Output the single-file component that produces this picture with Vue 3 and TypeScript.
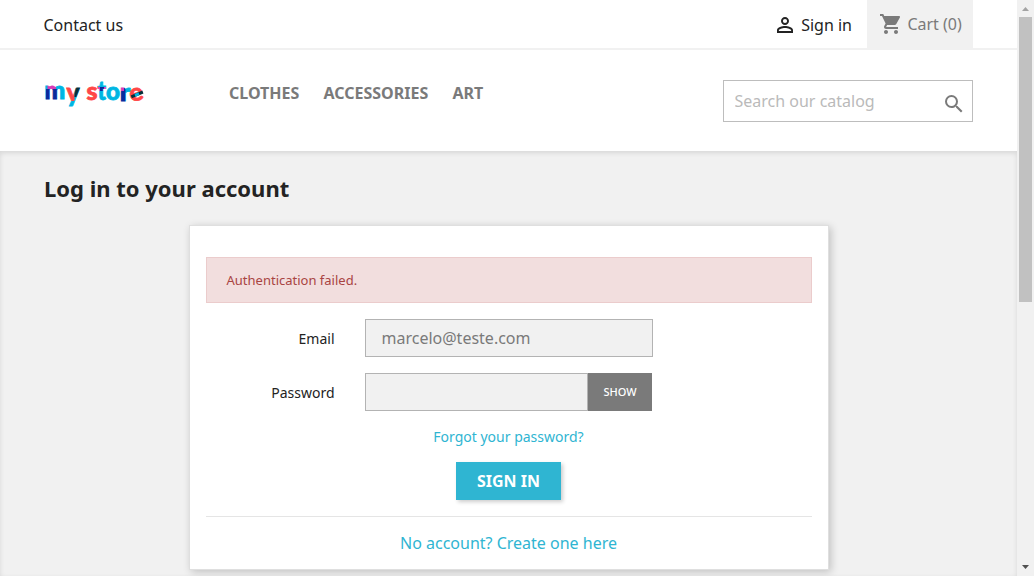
<script setup lang="ts">
import { ref } from 'vue'

const menu: string[] = ['Clothes', 'Accessories', 'Art']
const email = ref('marcelo@teste.com')
const password = ref('')
const search = ref('')
const visible = ref(false)
</script>

<template>
  <div class="window">
    <div class="page">
      <header>
        <nav class="top-nav">
          <div class="container top-row">
            <a class="contact">Contact us</a>
            <div class="tools">
              <a class="signin">
                <svg class="icon-user" viewBox="0 0 24 24" width="24" height="24">
                  <path d="M12 5.900a2.100 2.100 0 1 1 0 4.200 2.100 2.100 0 0 1 0-4.200m0 9c2.970 0 6.100 1.460 6.100 2.100v1.100H5.900V17c0-.64 3.130-2.100 6.100-2.100M12 4C9.790 4 8 5.790 8 8s1.790 4 4 4 4-1.790 4-4-1.790-4-4-4zm0 9c-2.670 0-8 1.340-8 4v3h16v-3c0-2.660-5.330-4-8-4z" />
                </svg>
                <span>Sign in</span>
              </a>
              <div class="cart">
                <svg viewBox="0 0 24 24" width="24" height="24">
                  <path d="M7 18c-1.100 0-1.990.9-1.990 2S5.900 22 7 22s2-.9 2-2-.9-2-2-2zM1 2v2h2l3.600 7.590-1.350 2.450c-.16.28-.25.61-.25.96 0 1.100.9 2 2 2h12v-2H7.420c-.14 0-.25-.11-.25-.25l.03-.12.9-1.630h7.450c.75 0 1.410-.41 1.750-1.030l3.580-6.490c.08-.14.12-.31.12-.48 0-.55-.45-1-1-1H5.210l-.94-2H1zm16 16c-1.100 0-1.990.9-1.990 2s.89 2 1.990 2 2-.9 2-2-.9-2-2-2z" />
                </svg>
                <span>Cart (0)</span>
              </div>
            </div>
          </div>
        </nav>
        <div class="container brand-row">
          <svg class="logo" width="100" height="48" viewBox="44 70 100 48" role="img" aria-label="my store">
            <defs>
              <pattern id="logo-ink" patternUnits="userSpaceOnUse" x="0" y="0" width="200" height="200">
                <rect width="200" height="200" fill="#00b5e2" />
                <rect x="47.500" y="80" width="8.500" height="9" fill="#d63ab5" />
                <rect x="46" y="89" width="12.500" height="14" fill="#0a2a9c" />
                <rect x="66" y="80" width="8.500" height="21" fill="#ff4747" />
                <rect x="74.500" y="80" width="6" height="17" fill="#04303a" />
                <rect x="86" y="80" width="12" height="30" fill="#ff4747" />
                <rect x="98" y="87" width="8" height="4" fill="#d63ab5" />
                <rect x="100" y="87" width="4" height="4" fill="#0a2a9c" />
                <rect x="120" y="80" width="5.500" height="30" fill="#0a2a9c" />
                <rect x="120" y="80" width="4" height="11" fill="#d63ab5" />
              </pattern>
            </defs>
            <g class="wordmark" fill="url(#logo-ink)" stroke="url(#logo-ink)">
              <text x="44.200" y="99" textLength="21" lengthAdjust="spacingAndGlyphs">m</text>
              <text class="tall" x="66.500" y="101.500" textLength="13" lengthAdjust="spacingAndGlyphs">y</text>
              <text x="86.500" y="100" textLength="11" lengthAdjust="spacingAndGlyphs">s</text>
              <text class="tall" x="97.500" y="100" textLength="8.500" lengthAdjust="spacingAndGlyphs">t</text>
              <text x="106" y="100" textLength="14" lengthAdjust="spacingAndGlyphs">o</text>
              <text x="119.800" y="100.500" textLength="10.500" lengthAdjust="spacingAndGlyphs">r</text>
              <text class="red" x="129.500" y="100.500" textLength="13.500" lengthAdjust="spacingAndGlyphs" transform="rotate(-14 137 94)">e</text>
            </g>
            <g fill="none" stroke-width="3">
              <path stroke="#04303a" d="M131.300 96.800 142.900 92" />
              <path stroke="#00b5e2" d="M135 95.300 139 93.600" />
            </g>
          </svg>
          <ul class="menu">
            <li v-for="item in menu" :key="item">{{ item }}</li>
          </ul>
          <form class="search" @submit.prevent>
            <input v-model="search" type="text" placeholder="Search our catalog" />
            <svg viewBox="0 0 24 24" width="24" height="24">
              <path d="M15.500 14h-.79l-.28-.27A6.471 6.471 0 0 0 16 9.500 6.500 6.500 0 1 0 9.500 16c1.610 0 3.090-.59 4.230-1.570l.27.28v.79l5 4.990L20.490 19l-4.990-5zm-6 0C7.010 14 5 11.990 5 9.500S7.010 5 9.500 5 14 7.010 14 9.500 11.990 14 9.500 14z" />
            </svg>
          </form>
        </div>
      </header>

      <main class="wrapper">
        <div class="container">
          <h1>Log in to your account</h1>
          <section class="card">
            <div class="alert">Authentication failed.</div>
            <form @submit.prevent>
              <div class="field">
                <label for="email">Email</label>
                <input id="email" v-model="email" class="control" type="text" />
              </div>
              <div class="field">
                <label for="password">Password</label>
                <div class="group">
                  <input id="password" v-model="password" class="control" :type="visible ? 'text' : 'password'" />
                  <button class="show" type="button" @click="visible = !visible">{{ visible ? 'Hide' : 'Show' }}</button>
                </div>
              </div>
              <a class="forgot">Forgot your password?</a>
              <button class="submit" type="submit">Sign in</button>
            </form>
            <hr />
            <a class="create">No account? Create one here</a>
          </section>
        </div>
      </main>
    </div>

    <div class="scrollbar">
      <svg width="17" height="17" viewBox="0 0 17 17"><path fill="#a3a3a3" d="M5 11h7L8.500 7z" /></svg>
      <div class="thumb"></div>
      <svg class="down" width="17" height="17" viewBox="0 0 17 17"><path fill="#505050" d="M5 6h7L8.500 10z" /></svg>
    </div>
  </div>
</template>

<style>
body {
  margin: 0;
  overflow: hidden;
}
</style>

<style scoped>
* {
  box-sizing: border-box;
}
.window {
  display: flex;
  width: 1034px;
  height: 576px;
  overflow: hidden;
  background: #fff;
  color: #232323;
  font-family: "Noto Sans", sans-serif;
  font-size: 16px;
  line-height: 20px;
}
input,
button {
  font-family: inherit;
  border-radius: 0;
  outline: none;
}
svg {
  display: block;
  flex: none;
}
.page {
  width: 1017px;
}
.container {
  width: 929px;
  margin: 0 auto;
}
.top-nav {
  height: 50px;
  border-bottom: 2px solid #f1f1f1;
}
.top-row {
  display: flex;
  justify-content: space-between;
}
.contact {
  padding-top: 15px;
  margin-left: -0.5px;
}
.tools {
  display: flex;
}
.signin {
  display: flex;
  padding-top: 13px;
  margin-right: 15px;
  gap: 4px;
}
.signin span {
  padding-top: 2px;
}
.cart {
  display: flex;
  width: 106px;
  height: 48px;
  padding: 12px 0 0 12px;
  gap: 4.4px;
  background: #f1f1f1;
  color: #7a7a7a;
}
.cart span {
  padding-top: 2px;
}
.icon-user {
  fill: #232323;
}
.cart svg,
.search svg {
  fill: #7a7a7a;
}
.brand-row {
  display: flex;
  height: 101px;
}
.logo {
  margin-top: 20px;
  overflow: visible;
}
.wordmark {
  font-family: Lato, sans-serif;
  font-weight: 900;
  font-size: 24px;
  stroke-width: 0.8px;
}
.tall {
  font-size: 27px;
}
.red {
  fill: #ff4747;
  stroke: #ff4747;
}
.menu {
  display: flex;
  gap: 24.2px;
  margin: 33px 0 0 85px;
  padding: 0;
  list-style: none;
  color: #7a7a7a;
  font-weight: 700;
  text-transform: uppercase;
}
.search {
  width: 250px;
  height: 42px;
  margin: 30px 0 0 auto;
  border: 1px solid #bdbdbd;
}
.search input {
  width: 217.5px;
  padding: 0 10.5px;
  border: 0;
  background: transparent;
  font-size: 16px;
}
.search input::placeholder {
  color: #bababa;
}
.search svg {
  margin-top: 11px;
}
.wrapper {
  height: 425px;
  padding-top: 24px;
  background: #f1f1f1;
  box-shadow: inset 0 2px 5px 0 rgba(0, 0, 0, 0.11);
}
h1 {
  margin: 0 0 24px;
  font-size: 22px;
  line-height: 26px;
  font-weight: 700;
}
.card {
  width: 640px;
  height: 345px;
  margin: 0 auto;
  padding: 31px 16px 0;
  border: 1px solid #dfdfdf;
  background: #fff;
  box-shadow: 2px 2px 8px 0 rgba(0, 0, 0, 0.2);
}
.alert {
  height: 46px;
  margin-bottom: 16px;
  padding: 12px 20px;
  border: 1px solid #ebcccc;
  background: #f2dede;
  color: #a94442;
  font-size: 13px;
}
form {
  display: block;
}
form.search {
  display: flex;
}
.field {
  display: flex;
  align-items: center;
  height: 38px;
  margin-bottom: 16px;
}
.field label {
  width: 129px;
  margin-right: 30px;
  padding-top: 2px;
  font-size: 14px;
  text-align: right;
}
.control {
  width: 288px;
  height: 38px;
  padding: 0 16px;
  border: 1px solid #b3b3b3;
  background: #f1f1f1;
  color: #7a7a7a;
  font-size: 16px;
}
.group {
  display: flex;
}
.group .control {
  width: 223px;
}
.show {
  width: 64px;
  height: 38px;
  padding: 0 0 2px 1px;
  border: 0;
  background: #7a7a7a;
  color: #fff;
  font-size: 11px;
  font-weight: 500;
  text-transform: uppercase;
}
.forgot {
  display: block;
  color: #2fb5d2;
  font-size: 14px;
  text-align: center;
}
.submit {
  display: block;
  width: 105px;
  height: 38px;
  margin: 15px auto 16px;
  padding: 0;
  border: 0;
  background: #2fb5d2;
  box-shadow: 2px 2px 4px 0 rgba(0, 0, 0, 0.2);
  color: #fff;
  font-size: 16px;
  font-weight: 700;
  text-transform: uppercase;
}
hr {
  height: 1px;
  margin: 0 0 16px;
  border: 0;
  background: #e5e5e5;
}
.create {
  display: block;
  color: #2fb5d2;
  text-align: center;
}
.scrollbar {
  display: flex;
  flex-direction: column;
  width: 17px;
  height: 576px;
  background: #f1f1f1;
}
.thumb {
  width: 13px;
  height: 285px;
  margin-left: 2px;
  background: #c1c1c1;
}
.down {
  margin-top: auto;
}
</style>
